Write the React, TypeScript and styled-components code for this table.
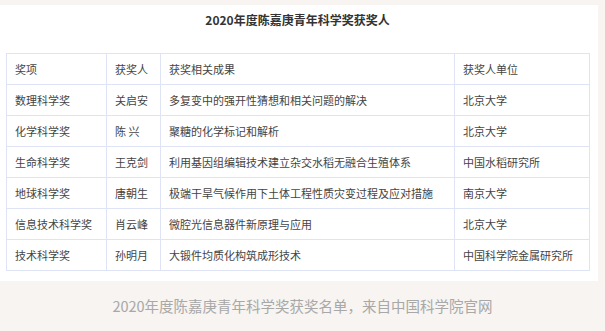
import React from "react";
import styled, { createGlobalStyle } from "styled-components";

const GlobalStyle = createGlobalStyle`
  html, body {
    margin: 0;
    padding: 0;
    background: #f7f4f1;
    font-family: "Noto Sans CJK SC", "Noto Sans", sans-serif;
  }
`;

const Page = styled.div`
  width: 605px;
  height: 331px;
  padding-top: 5px;
  box-sizing: border-box;
  overflow: hidden;
`;

const Card = styled.div`
  width: 598px;
  height: 276px;
  background: #ffffff;
  box-sizing: border-box;
  padding: 5px 9px 0 6px;
`;

const Title = styled.h2`
  margin: 0;
  height: 20px;
  line-height: 20px;
  text-align: center;
  font-size: 12px;
  font-weight: 700;
  color: #333333;
`;

const Table = styled.table`
  margin-top: 23px;
  width: 583px;
  border-collapse: collapse;
  table-layout: fixed;
  font-size: 11px;
  color: #444444;
`;

const Cell = styled.td<{ w: number }>`
  width: ${(p) => p.w}px;
  height: 31px;
  padding: 0 8px;
  border: 1px solid #dfe3f6;
  box-sizing: border-box;
  text-align: left;
  font-weight: 400;
  white-space: nowrap;
  line-height: 14px;
`;

const Caption = styled.div`
  text-align: center;
  margin-top: 15px;
  font-size: 14.5px;
  line-height: 20px;
  color: #a8a8a8;
`;

const widths = [100, 54, 294, 135];

const rows = [
  ["数理科学奖", "关启安", "多复变中的强开性猜想和相关问题的解决", "北京大学"],
  ["化学科学奖", "陈 兴", "聚糖的化学标记和解析", "北京大学"],
  ["生命科学奖", "王克剑", "利用基因组编辑技术建立杂交水稻无融合生殖体系", "中国水稻研究所"],
  ["地球科学奖", "唐朝生", "极端干旱气候作用下土体工程性质灾变过程及应对措施", "南京大学"],
  ["信息技术科学奖", "肖云峰", "微腔光信息器件新原理与应用", "北京大学"],
  ["技术科学奖", "孙明月", "大锻件均质化构筑成形技术", "中国科学院金属研究所"],
];

export default function App() {
  return (
    <>
      <GlobalStyle />
      <Page>
        <Card>
          <Title>2020年度陈嘉庚青年科学奖获奖人</Title>
          <Table>
            <tbody>
              <tr>
                {["奖项", "获奖人", "获奖相关成果", "获奖人单位"].map((h, i) => (
                  <Cell key={h} w={widths[i]}>
                    {h}
                  </Cell>
                ))}
              </tr>
              {rows.map((r) => (
                <tr key={r[0]}>
                  {r.map((c, i) => (
                    <Cell key={i} w={widths[i]}>
                      {c}
                    </Cell>
                  ))}
                </tr>
              ))}
            </tbody>
          </Table>
        </Card>
        <Caption>2020年度陈嘉庚青年科学奖获奖名单，来自中国科学院官网</Caption>
      </Page>
    </>
  );
}
